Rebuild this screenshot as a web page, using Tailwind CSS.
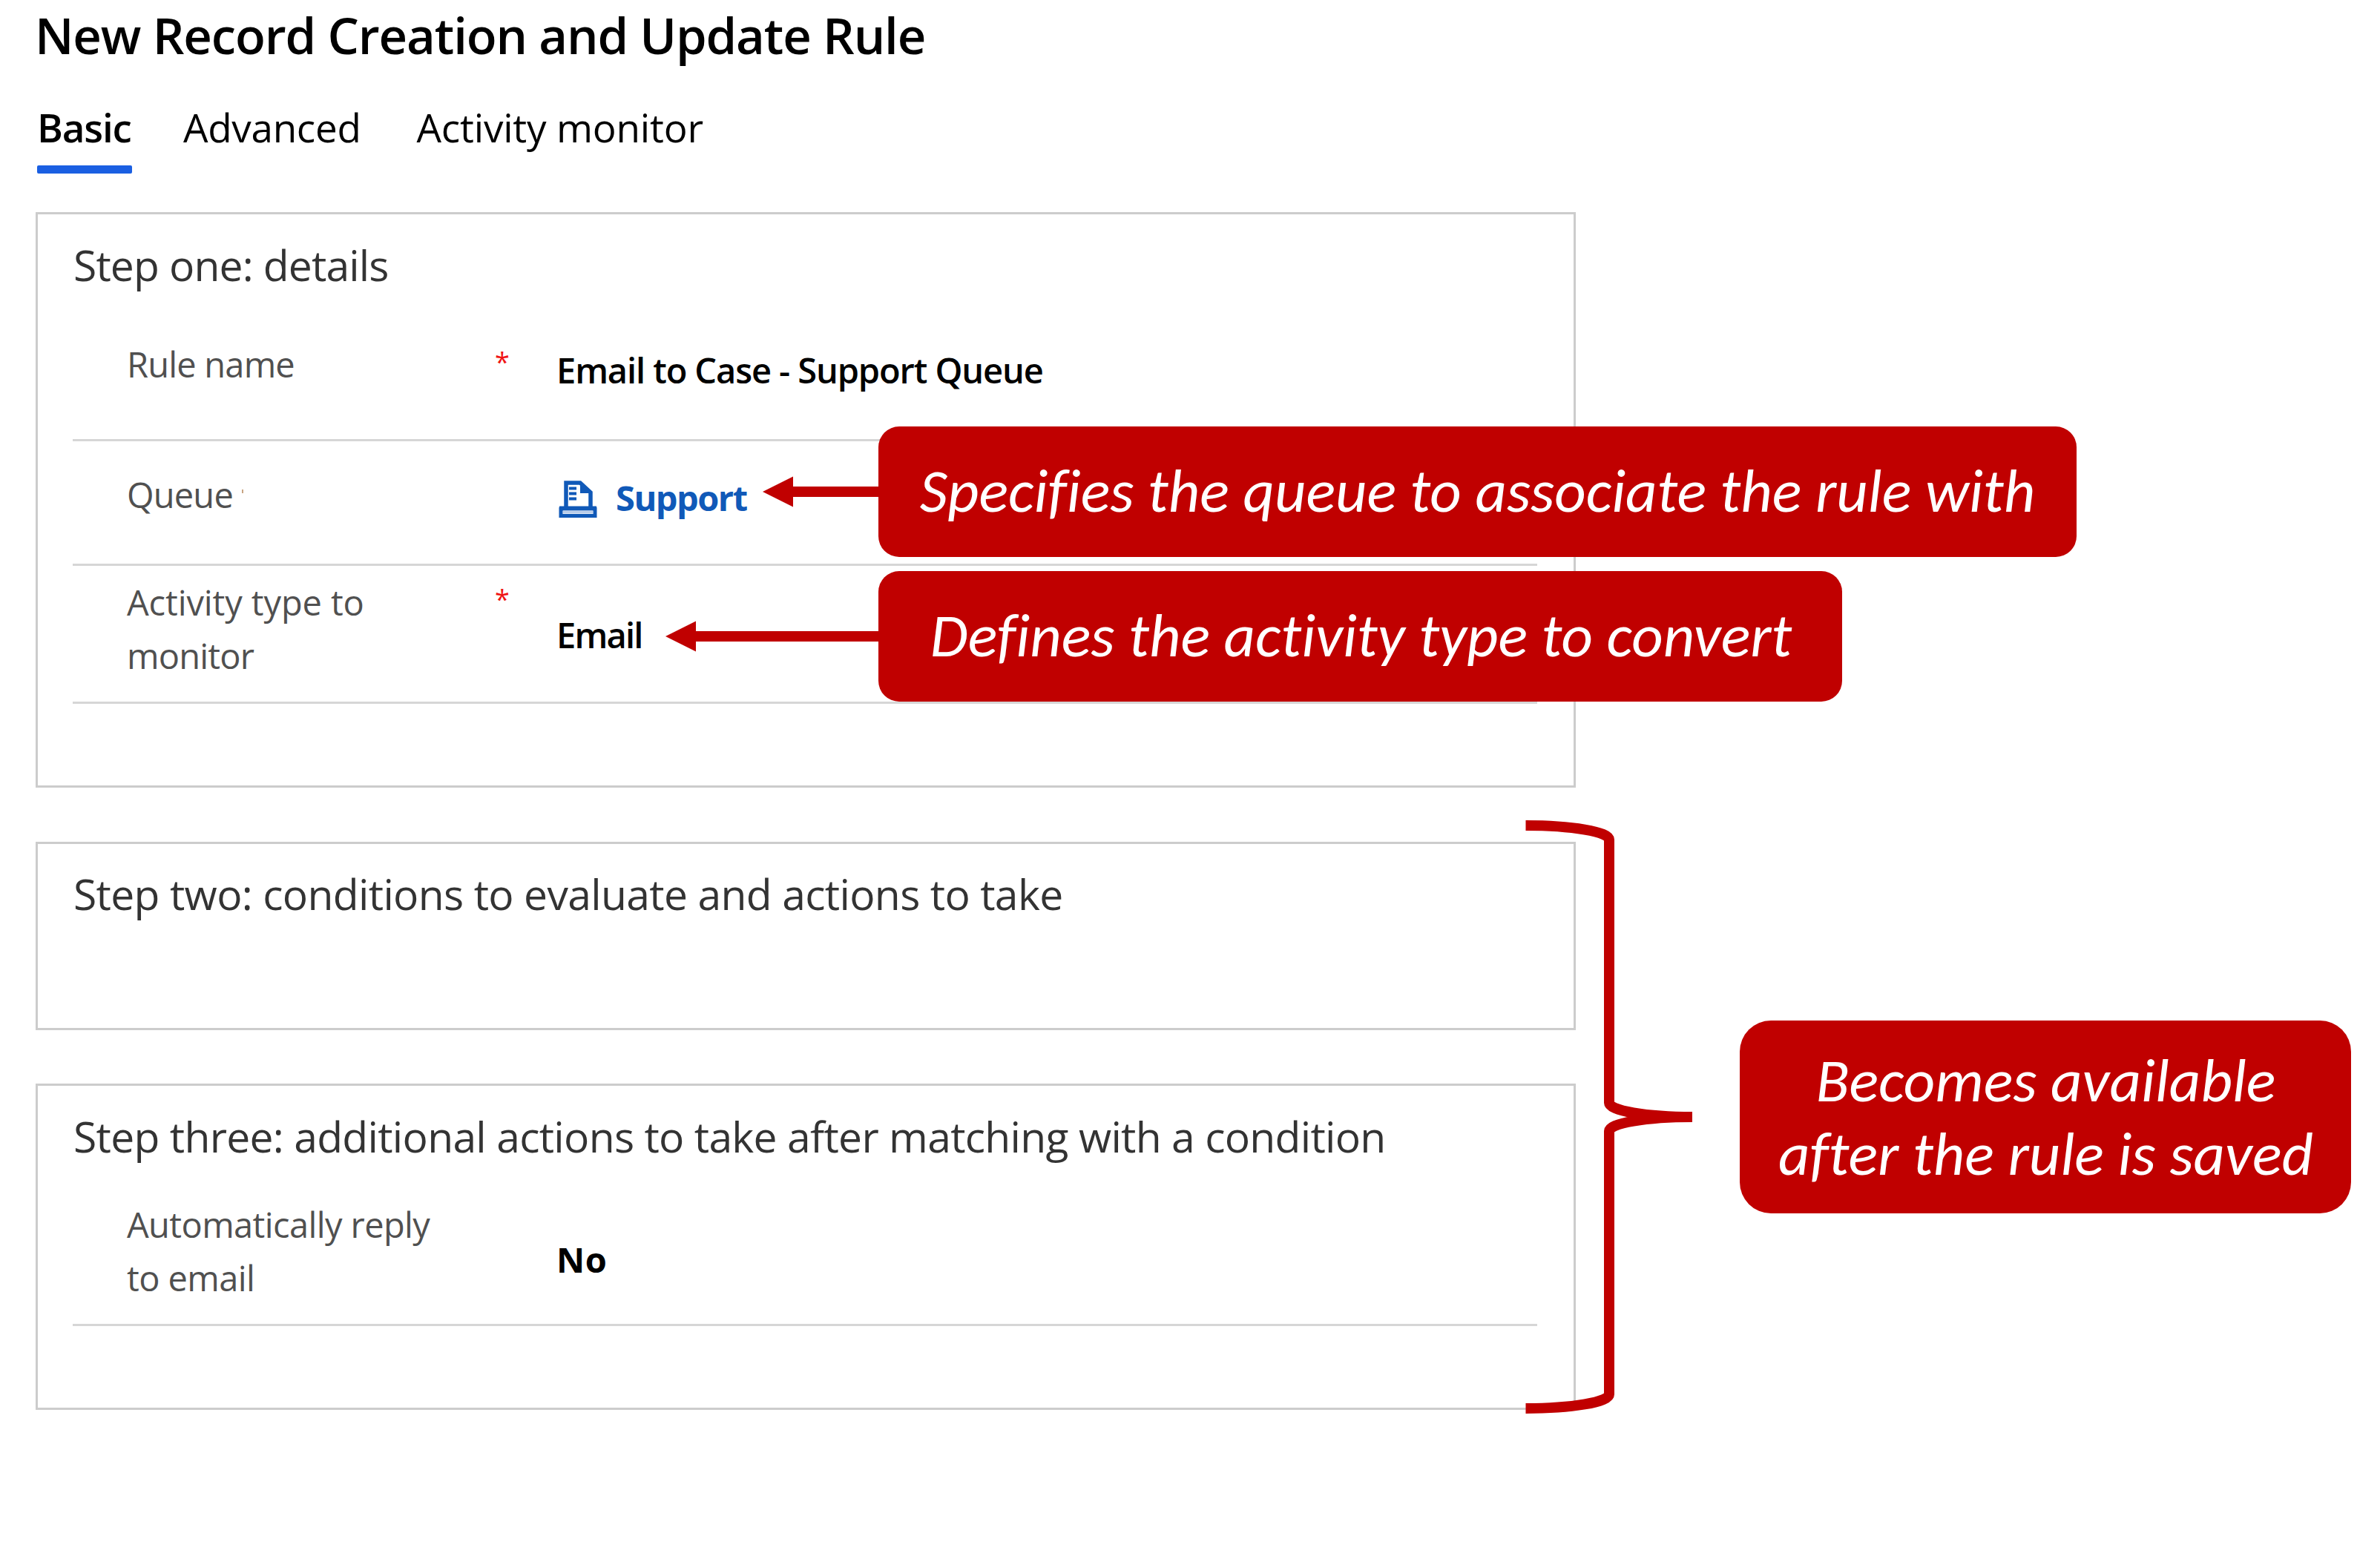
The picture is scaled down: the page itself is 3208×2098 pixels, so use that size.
<!DOCTYPE html>
<html lang="en">
<head>
<meta charset="utf-8">
<title>New Record Creation and Update Rule</title>
<script src="https://cdn.jsdelivr.net/npm/@tailwindcss/browser@4"></script>
</head>
<body class="relative h-[2098px] w-[3208px] overflow-hidden bg-white font-['Open_Sans','Noto_Sans',sans-serif] text-black">

<main class="w-[2124px] pl-[48px]">
  <h1 class="-ml-px h-[136px] pt-[7px] text-[67px] leading-[80px] font-semibold tracking-[-1.12px] whitespace-nowrap">New Record Creation and Update Rule</h1>

  <nav class="flex h-[150px] pl-[2px] text-[53px] leading-[72px] whitespace-nowrap">
    <div class="flex h-[98px] w-[128px] flex-col justify-between font-semibold tracking-[-1.2px]">
      <span>Basic</span>
      <span class="h-[11px] rounded-[2px] bg-[#1a5fe2]"></span>
    </div>
    <div class="ml-[69px] tracking-[-0.3px]">Advanced</div>
    <div class="ml-[75px] tracking-[-0.2px]">Activity monitor</div>
  </nav>

  <section class="h-[776px] border-[3px] border-[#cccccc] pt-[28px] pr-[49px] pl-[47px]">
    <h2 class="pl-px text-[57px] leading-[80px] tracking-[-0.85px] text-[#333333]">Step one: details</h2>
    <div class="flex h-[198px] border-b-[3px] border-[#d6d6d6] pl-[73px] text-[47px] leading-[72px]">
      <div class="w-[496px] pt-[58px] tracking-[-0.8px] text-[#505050]">Rule name</div>
      <div class="w-[83px] pt-[55px] text-[36px] text-[#f01414]">*</div>
      <div class="pt-[66px] font-semibold tracking-[-1.1px]">Email to Case - Support Queue</div>
    </div>
    <div class="flex h-[168px] border-b-[3px] border-[#d6d6d6] pl-[73px] text-[47px] leading-[72px]">
      <div class="flex w-[578px] pt-[36px] tracking-[-0.8px] text-[#505050]">Queue<span class="mt-[29px] ml-[12px] h-[5px] w-[2px] bg-[#c9a583]"></span></div>
      <div class="flex pt-[40px] font-bold tracking-[-1.5px] text-[#1059b8]">
        <svg class="mt-[12px] mr-[25px] ml-[4px] h-[52px] w-[52px]" viewBox="0 0 52 52" fill="none" stroke="#1059b8">
          <path d="M10 38V4H29L43 17V38" stroke-width="5.5"/>
          <path d="M29 2L45 18H29Z" fill="#1059b8" stroke="none"/>
          <path d="M14 11.5H24M14 18.500H24M14 25.500H24" stroke-width="4"/>
          <path d="M3 37V48.500H49V37" stroke-width="5"/>
          <path d="M1 38.500H51" stroke-width="6"/>
          <path d="M6 43.500H46" stroke="#b9cdea" stroke-width="4"/>
        </svg>
        <span>Support</span>
      </div>
    </div>
    <div class="flex h-[186px] border-b-[3px] border-[#d6d6d6] pl-[73px] text-[47px] leading-[72px]">
      <div class="w-[496px] pt-[13px] tracking-[-0.1px] text-[#505050]">Activity type to<br><span class="tracking-[-0.8px]">monitor</span></div>
      <div class="w-[83px] pt-[9px] text-[36px] text-[#f01414]">*</div>
      <div class="pt-[57px] font-semibold tracking-[-1.8px]">Email</div>
    </div>
  </section>

  <section class="mt-[73px] h-[254px] border-[3px] border-[#cccccc] pt-[27px] pr-[49px] pl-[47px]">
    <h2 class="pl-px text-[57px] leading-[80px] tracking-[-0.66px] text-[#333333]">Step two: conditions to evaluate and actions to take</h2>
  </section>

  <section class="mt-[72px] h-[440px] border-[3px] border-[#cccccc] pt-[28px] pr-[49px] pl-[47px]">
    <h2 class="pl-px text-[57px] leading-[80px] tracking-[-0.7px] text-[#333333]">Step three: additional actions to take after matching with a condition</h2>
    <div class="flex h-[216px] border-b-[3px] border-[#d6d6d6] pl-[73px] text-[47px] leading-[72px]">
      <div class="w-[579px] pt-[43px] tracking-[-0.6px] text-[#505050]">Automatically reply<br>to email</div>
      <div class="pt-[90px] font-bold tracking-[0.5px]">No</div>
    </div>
  </section>
</main>

<!-- Annotations over the form -->
<svg class="absolute top-0 left-0 h-[2098px] w-[3208px]" viewBox="0 0 3208 2098" fill="none">
  <path d="M1028 663L1069 642.500V656H1190V670H1069V683.500Z" fill="#c00000"/>
  <path d="M897 858L938 837.500V851H1190V865H938V878.500Z" fill="#c00000"/>
  <path d="M2056.500 1113A112.500 19 0 0 1 2169 1132V1487A112 19 0 0 0 2281 1506A112 19 0 0 0 2169 1525V1880A112.500 19 0 0 1 2056.500 1899" stroke="#c00000" stroke-width="14"/>
</svg>
<div class="absolute top-[575px] left-[1184px] flex h-[176px] w-[1615px] items-center justify-center rounded-[28px] bg-[#c00000] pb-[3px] font-[Carlito,Calibri,Lato,sans-serif] text-[82.7px] leading-[99px] whitespace-nowrap text-white italic [font-variant-ligatures:none]">Specifies the queue to associate the rule with</div>
<div class="absolute top-[770px] left-[1184px] flex h-[176px] w-[1299px] items-center justify-center rounded-[28px] bg-[#c00000] pb-[3px] pl-[2px] font-[Carlito,Calibri,Lato,sans-serif] text-[82.7px] leading-[99px] whitespace-nowrap text-white italic [font-variant-ligatures:none]">Defines the activity type to convert</div>
<div class="absolute top-[1376px] left-[2345px] flex h-[260px] w-[824px] items-center justify-center rounded-[42px] bg-[#c00000] pb-px pl-px text-center font-[Carlito,Calibri,Lato,sans-serif] text-[82.7px] leading-[99px] whitespace-nowrap text-white italic [font-variant-ligatures:none]">Becomes available<br>after the rule is saved</div>
</body>
</html>
